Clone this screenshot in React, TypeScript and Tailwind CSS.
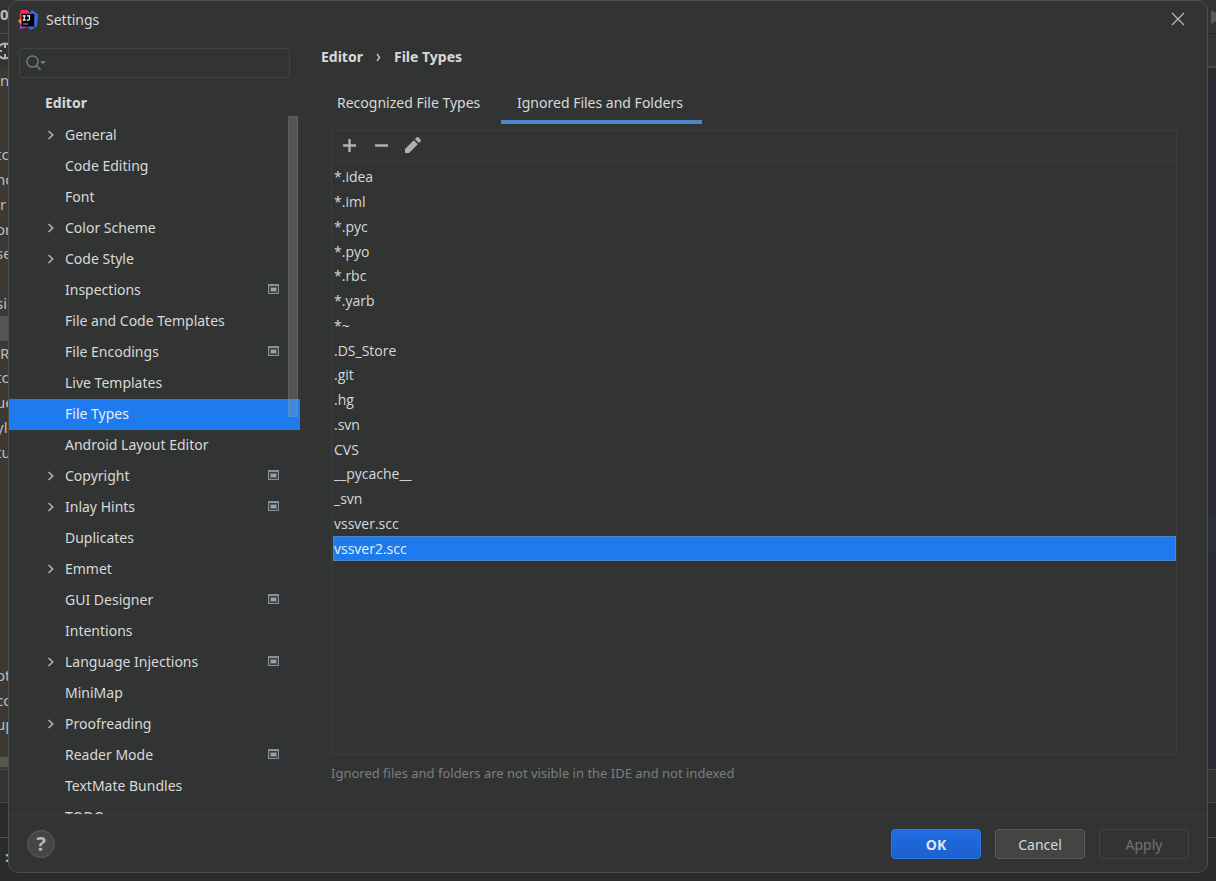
import React from "react";

type Node = { label: string; expandable?: boolean; project?: boolean };

const nodes: Node[] = [
  { label: "General", expandable: true },
  { label: "Code Editing" },
  { label: "Font" },
  { label: "Color Scheme", expandable: true },
  { label: "Code Style", expandable: true },
  { label: "Inspections", project: true },
  { label: "File and Code Templates" },
  { label: "File Encodings", project: true },
  { label: "Live Templates" },
  { label: "File Types" },
  { label: "Android Layout Editor" },
  { label: "Copyright", expandable: true, project: true },
  { label: "Inlay Hints", expandable: true, project: true },
  { label: "Duplicates" },
  { label: "Emmet", expandable: true },
  { label: "GUI Designer", project: true },
  { label: "Intentions" },
  { label: "Language Injections", expandable: true, project: true },
  { label: "MiniMap" },
  { label: "Proofreading", expandable: true },
  { label: "Reader Mode", project: true },
  { label: "TextMate Bundles" },
  { label: "TODO" },
];

const patterns = [
  "*.idea", "*.iml", "*.pyc", "*.pyo", "*.rbc", "*.yarb", "*~", ".DS_Store",
  ".git", ".hg", ".svn", "CVS", "__pycache__", "_svn", "vssver.scc", "vssver2.scc",
];

const editorLines = [
  "n", "", "", "tc", "nc", "r", "or", "se", "", "si", "", "R", "tc", "ue", "yl", "tu",
  "", "", "", "", "", "", "", "", "ot", "co", "up",
];

function Logo() {
  return (
    <svg width="20" height="20" viewBox="0 0 20 20" aria-hidden="true">
      <defs>
        <linearGradient id="lr" x1="0" y1="0" x2="1" y2="1">
          <stop offset="0" stopColor="#fe2857" />
          <stop offset="1" stopColor="#e02e90" />
        </linearGradient>
        <linearGradient id="lb" x1="0" y1="0" x2="0" y2="1">
          <stop offset="0" stopColor="#3a6cf0" />
          <stop offset="1" stopColor="#3f63e6" />
        </linearGradient>
      </defs>
      <path d="M3 0h6l3 3v8H3L1.5 6z" fill="url(#lr)" />
      <path d="M0 11l2.5-3 2.5 5-2 2z" fill="#fc801d" />
      <path d="M2.5 14l-1 5 6-1 3-3z" fill="#b436c4" />
      <path d="M11 4l3-4 4 3 2 1-1 12-6 4-4-3z" fill="url(#lb)" />
      <path d="M3.5 3.8h12.8v12.6H3.5z" fill="#000" />
      <path d="M4.6 5.8h3.2M6.2 5.8v4.2M4.6 10.1h3.2M9 5.8h2.5v3.1q0 1.2-1.2 1.2H8.8" stroke="#fff" strokeWidth="1.2" fill="none" />
      <path d="M5 14h5" stroke="#aaa" strokeWidth="1" />
    </svg>
  );
}

function ProjectIcon() {
  return (
    <svg className="mb-0.5 shrink-0" width="11" height="10" viewBox="0 0 11 10" aria-hidden="true">
      <path d="M0 0h11v10H0z" fill="#87939a" />
      <path d="M1 2h9v7H1z" fill="#3c4347" />
      <path d="M2 3h7v5H2z" fill="#59636a" />
      <path d="M3 4h5v3H3z" fill="#98a3aa" />
    </svg>
  );
}

function Backdrop() {
  return (
    <div className="absolute inset-0 flex justify-between overflow-hidden text-[15px] text-[#bcbcbc]" aria-hidden="true">
      <div className="flex w-5 flex-col">
        <div className="h-[34px] border-b border-[#4c4c4c] bg-[#323333] pt-1 font-bold">0</div>
        <div className="flex h-[33px] items-center bg-[#323333]">
          <svg className="-ml-1 shrink-0" width="18" height="18" viewBox="0 0 18 18" fill="none" stroke="#afb1b3" strokeWidth="2">
            <circle cx="9" cy="9" r="7.5" />
            <path d="M9 1v5M9 12v5M1 9h5M12 9h5" />
          </svg>
        </div>
        <div className="flex h-[702px] flex-col bg-[#3c3934] pt-px">
          <div className="flex h-[669px] shrink-0 flex-col">
            {editorLines.map((t, i) => (
              <div key={i} className={i === 10 ? "flex-1 bg-[#535559]" : "flex-1 leading-6"}>
                <span className={t.length > 1 ? "-ml-1" : ""}>{t}</span>
              </div>
            ))}
          </div>
          <div className="mt-auto mb-0.5 h-[10px] shrink-0 bg-[#5a5853]" />
        </div>
        <div className="h-[34px] border-y border-[#474747] bg-[#313335]" />
        <div className="h-[35px] border-b border-[#555] bg-[#2b2b2b]" />
        <div className="flex-1 bg-[#2b2b2b] pt-2 pl-[5px] font-bold text-[#9fb3c0]">:</div>
      </div>
      <div className="flex w-5 flex-col">
        <div className="flex h-[34px] items-center justify-end border-b border-[#272727] bg-[#323333]">
          <svg width="5" height="14" viewBox="0 0 5 14">
            <path d="M0 0l5 3v8l-5 3z" fill="#5b5b5b" />
          </svg>
        </div>
        <div className="h-[34px] border-b-2 border-[#454545] bg-[#343533]" />
        <div className="h-[449px] bg-[#2a2a31]" />
        <div className="h-[35px] bg-[#2d2f38]" />
        <div className="h-[217px] bg-[#2a2a31]" />
        <div className="h-[34px] border-y border-[#474747] bg-[#313235]" />
        <div className="h-[35px] border-b border-[#555] bg-[#2b2b2b]" />
        <div className="flex-1 bg-[#2b2b2b]" />
      </div>
    </div>
  );
}

function Sidebar() {
  return (
    <aside className="flex w-[291px] shrink-0 flex-col overflow-hidden">
      <label className="mx-[10px] mt-[10px] flex h-[30px] shrink-0 items-center rounded-[3px] border border-[#434545] pl-[6px]">
        <svg width="21" height="16" viewBox="0 0 21 16" fill="none" aria-hidden="true">
          <circle cx="6.5" cy="6.5" r="5.6" stroke="#6e7a82" strokeWidth="1.5" />
          <path d="M10.5 10.5l4 4.5" stroke="#6e7a82" strokeWidth="1.8" />
          <path d="M14 6h6l-3 3.5z" fill="#6e7a82" />
        </svg>
        <input type="search" aria-label="Search settings" className="min-w-0 flex-1 bg-transparent outline-none" />
      </label>
      <div className="mt-3 flex h-[26px] shrink-0 items-center pl-9 font-bold">Editor</div>
      <div className="relative min-h-0 flex-1 overflow-hidden">
        <ul className="pt-1">
          {nodes.map((n) => (
            <li key={n.label}>
              <button
                type="button"
                className={
                  n.label === "File Types"
                    ? "flex h-[31px] w-full items-center bg-[#1e7bee] pr-[21px] pb-0.5 pl-[37px] text-left text-[#e8edf3]"
                    : "flex h-[31px] w-full items-center pr-[21px] pb-0.5 pl-[37px] text-left"
                }
              >
                <span className="flex w-[19px] shrink-0 pl-px">
                  {n.expandable && (
                    <svg width="8" height="10" viewBox="0 0 8 10" fill="none" aria-hidden="true">
                      <path d="M1.5 1l4.2 4-4.2 4" stroke="#b0b2b3" strokeWidth="1.6" />
                    </svg>
                  )}
                </span>
                <span className="flex-1 whitespace-nowrap">{n.label}</span>
                {n.project && <ProjectIcon />}
              </button>
            </li>
          ))}
        </ul>
        <div className="absolute top-0 right-[2px] h-[301px] w-[10px] border border-white/5 bg-[#a6a6a6]/30" />
      </div>
    </aside>
  );
}

function IgnoredFiles() {
  return (
    <main className="flex min-w-0 flex-1 flex-col pr-[30px] pl-[21px]">
      <h1 className="mt-1 flex h-[30px] shrink-0 items-center font-bold">
        <span>Editor</span>
        <svg className="mx-[13px]" width="5" height="9" viewBox="0 0 5 9" fill="none" aria-hidden="true">
          <path d="M1 1l2.6 3.5L1 8" stroke="#c8c8c8" strokeWidth="1.4" />
        </svg>
        <span>File Types</span>
      </h1>
      <div role="tablist" className="mt-[10px] flex h-[42px] shrink-0">
        <button type="button" role="tab" aria-selected={false} className="w-[180px] border-b-4 border-transparent px-4 pt-[3px] text-left">
          Recognized File Types
        </button>
        <button type="button" role="tab" aria-selected={true} className="w-[201px] border-b-4 border-[#4a88c7] px-4 pt-[3px] text-left">
          Ignored Files and Folders
        </button>
      </div>
      <section className="mt-[6px] ml-[10px] flex min-h-0 flex-1 flex-col border border-[#3c3e3e]">
        <div className="flex h-[31px] shrink-0 items-center gap-3 border-b border-[#3c3e3e] pb-0.5 pl-[7px]">
          <button type="button" aria-label="Add" className="flex size-5 items-center justify-center">
            <svg width="13" height="13" viewBox="0 0 13 13" aria-hidden="true">
              <path d="M5.3 0h2.4v5.3H13v2.4H7.7V13H5.3V7.7H0V5.3h5.3z" fill="#afb1b3" />
            </svg>
          </button>
          <button type="button" aria-label="Remove" className="flex size-5 items-center justify-center">
            <svg width="13" height="13" viewBox="0 0 13 13" aria-hidden="true">
              <path d="M0 5.3h13v2.4H0z" fill="#afb1b3" />
            </svg>
          </button>
          <button type="button" aria-label="Edit" className="flex size-5 items-center justify-center">
            <svg width="18" height="18" viewBox="0 0 18 18" fill="#afb1b3" aria-hidden="true">
              <path d="M1 17v-4l8.8-8.8 4 4L5 17zM10.9 3.1l1.6-1.6q1-1 2 0l2 2q1 1 0 2l-1.6 1.6z" />
            </svg>
          </button>
        </div>
        <ul className="mt-[3px] flex h-[396px] shrink-0 flex-col pl-px font-['Open_Sans','Noto_Sans',sans-serif]">
          {patterns.map((p) => (
            <li
              key={p}
              className={
                p === "vssver2.scc"
                  ? "flex min-h-0 flex-1 items-center border border-[#4c86cf] bg-[#1e7bee] text-[#e8edf3]"
                  : "flex min-h-0 flex-1 items-center border border-transparent"
              }
            >
              {p}
            </li>
          ))}
        </ul>
      </section>
      <p className="mt-2 mb-[31px] ml-[10px] h-5 shrink-0 text-[13px] leading-5 text-[#7d7e7e]">
        Ignored files and folders are not visible in the IDE and not indexed
      </p>
    </main>
  );
}

export default function App() {
  return (
    <div className="relative flex h-screen flex-col bg-[#2b2b2b] pr-2 pb-2 pl-2 font-['Noto_Sans','Open_Sans',sans-serif] text-sm text-[#d8d9d9]">
      <Backdrop />
      <div role="dialog" aria-label="Settings" className="relative flex min-h-0 flex-1 flex-col overflow-hidden rounded-[10px] border border-[#4d4d4d] bg-[#323433]">
        <header className="flex h-[37px] shrink-0 items-center gap-2 pr-[22px] pl-[9px]">
          <Logo />
          <span className="flex-1">Settings</span>
          <button type="button" aria-label="Close" className="pb-0.5">
            <svg width="14" height="14" viewBox="0 0 14 14" aria-hidden="true">
              <path d="M1 1l12 12M13 1L1 13" stroke="#b8b8b8" strokeWidth="1.3" />
            </svg>
          </button>
        </header>
        <div className="flex min-h-0 flex-1">
          <Sidebar />
          <IgnoredFiles />
        </div>
        <footer className="flex h-[58px] shrink-0 items-center gap-[14px] border-t border-[#3c3e3e] pr-[18px] pl-[18px]">
          <button type="button" aria-label="Help" className="mr-auto flex size-7 items-center justify-center rounded-full border border-[#5b5c5c] bg-[#464646] text-xl font-bold text-[#b4b6b8]">
            ?
          </button>
          <button type="button" className="h-[30px] w-[90px] rounded-[4px] border border-[#2f74e0] bg-linear-to-b from-[#206ce2] to-[#1c61cf] pt-0.5 font-bold text-[#dfe6f0]">
            OK
          </button>
          <button type="button" className="h-[30px] w-[90px] rounded-[4px] border border-[#5b5c5c] bg-[#444] pt-0.5">
            Cancel
          </button>
          <button type="button" disabled className="h-[30px] w-[90px] rounded-[4px] border border-[#434545] pt-0.5 text-[#717272]">
            Apply
          </button>
        </footer>
      </div>
    </div>
  );
}
